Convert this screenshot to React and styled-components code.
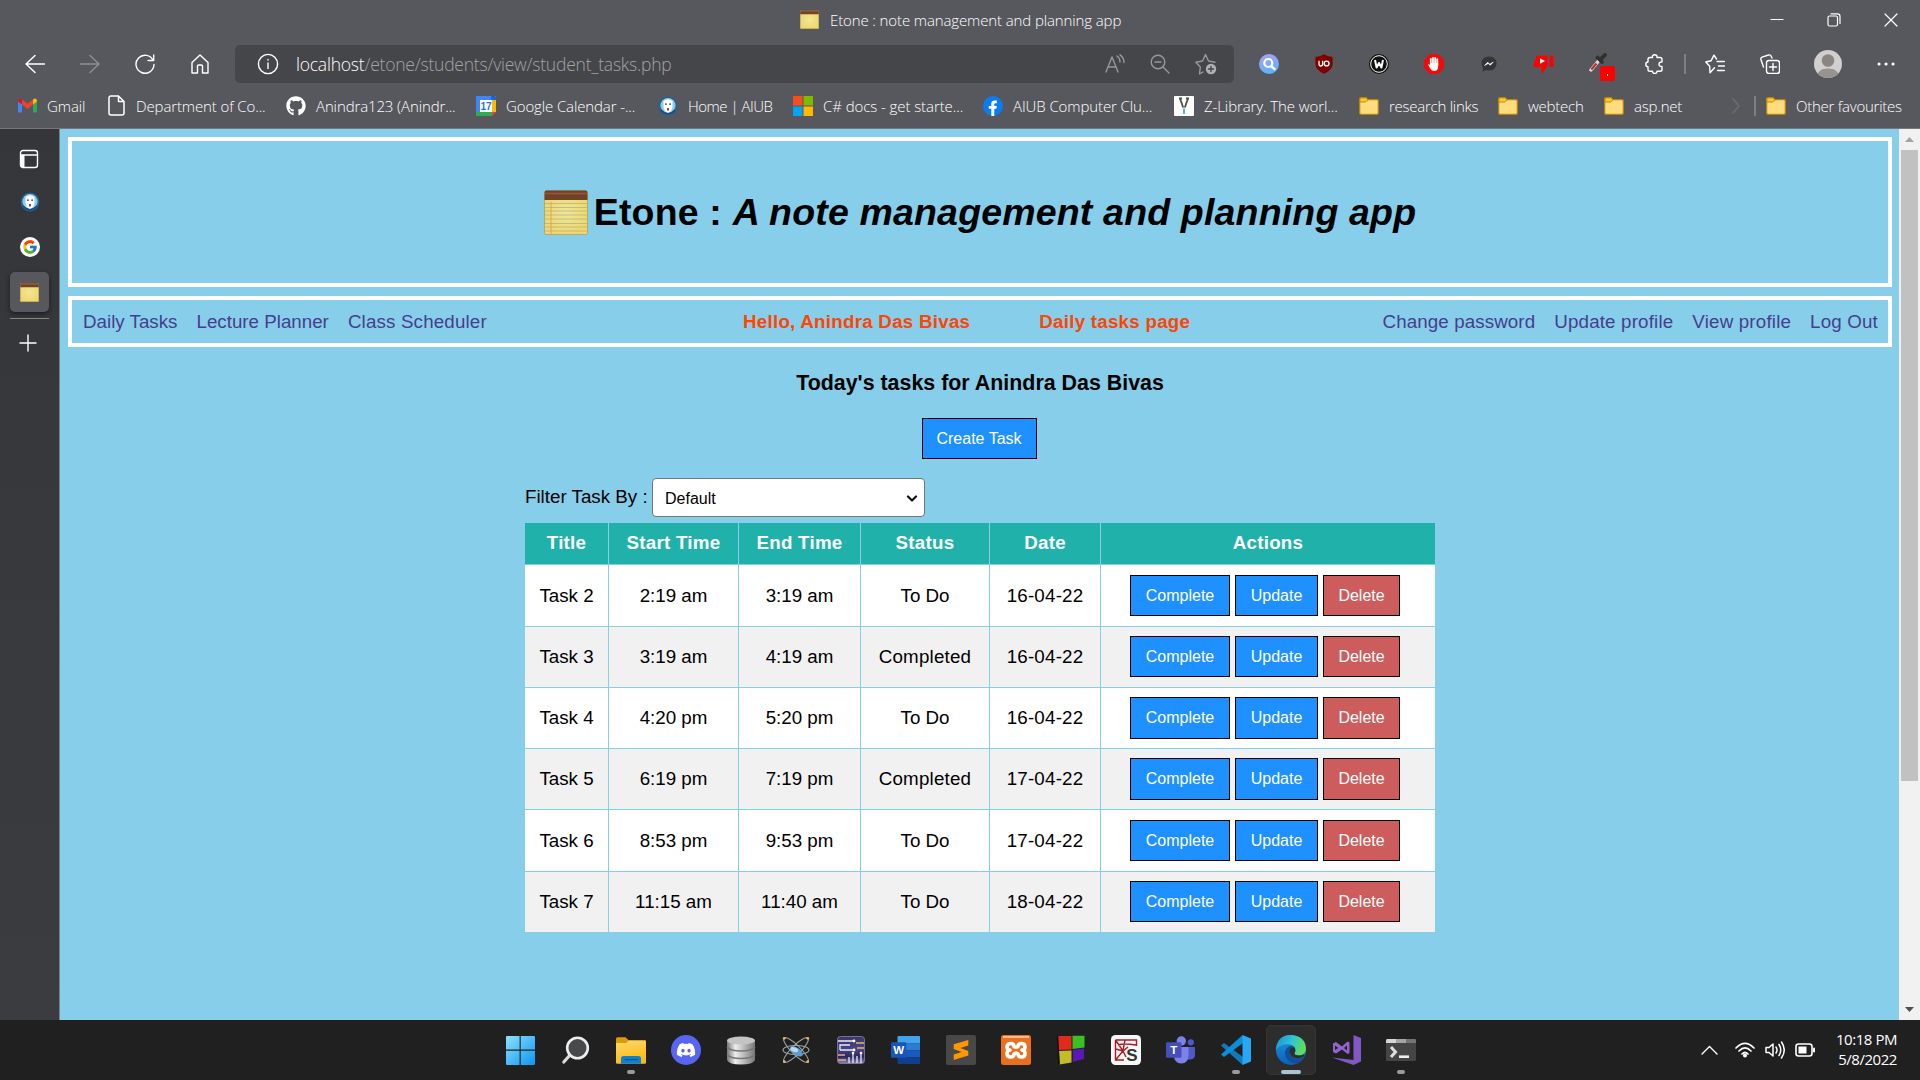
import React from "react";
import styled, { createGlobalStyle } from "styled-components";
import { FaGithub, FaDiscord } from "react-icons/fa";
import { FcGoogle } from "react-icons/fc";

const Global = createGlobalStyle`
  * { box-sizing: border-box; }
  html, body { margin: 0; padding: 0; overflow: hidden; background: #202020; }
  svg { display: block; flex: none; }
`;

const ui = `"Open Sans", "Noto Sans", sans-serif`;
const arial = `"Liberation Sans", Arial, sans-serif`;

const Desktop = styled.div`
  width: 1920px;
  height: 1080px;
  display: flex;
  flex-direction: column;
  font-family: ${ui};
`;

/* ---------- browser chrome ---------- */
const Chrome = styled.header`
  height: 129px;
  flex: none;
  background: #57585d;
  border-bottom: 1px solid #77787b;
  color: #fff;
  display: flex;
  flex-direction: column;
`;
const TitleBar = styled.div`
  height: 40px;
  display: grid;
  grid-template-columns: 800px 1fr 177px;
  align-items: center;
`;
const WindowTitle = styled.div`
  grid-column: 2;
  display: flex;
  align-items: center;
  gap: 11px;
  padding-bottom: 1px;
  font-size: 15px;
  font-weight: 300;
  line-height: 20px;
  letter-spacing: -0.12px;
  white-space: pre;
`;
const WindowButtons = styled.div`
  display: flex;
  justify-content: space-between;
  align-items: center;
  padding: 0 22px 0 27px;
`;
const ToolRow = styled.div`
  height: 48px;
  display: flex;
  align-items: center;
`;
const ToolSlot = styled.div`
  width: ${(p) => p.$w || 55}px;
  flex: none;
  display: flex;
  justify-content: center;
  align-items: center;
  padding-top: ${(p) => p.$drop || 0}px;
`;
const NavButtons = styled.div`
  width: 235px;
  padding-left: 7px;
  display: flex;
`;
const Address = styled.div`
  width: 999px;
  height: 38px;
  border-radius: 5px;
  background: #454649;
  display: flex;
  align-items: center;
  padding-left: 22px;
`;
const Url = styled.div`
  flex: 1;
  padding-left: 17px;
  font-size: 17.5px;
  line-height: 24px;
  font-weight: 300;
  letter-spacing: -0.22px;
  color: #a3a3a5;
  b { font-weight: 300; color: #fff; }
`;
const Extensions = styled.div`
  display: flex;
  align-items: center;
  padding-left: 7px;
`;
const VRule = styled.div`
  width: 2px;
  height: 20px;
  background: #7d7e82;
`;
const Bookmarks = styled.div`
  height: 35px;
  display: flex;
  align-items: center;
  padding-left: 18px;
`;
const Bookmark = styled.div`
  width: ${(p) => p.$w}px;
  flex: none;
  display: flex;
  align-items: center;
  gap: 10px;
  font-size: 15px;
  font-weight: 300;
  line-height: 20px;
  white-space: pre;
  letter-spacing: ${(p) => p.$ls || 0}px;
`;

/* ---------- middle ---------- */
const Middle = styled.div`
  height: 891px;
  flex: none;
  display: flex;
`;
const Sidebar = styled.aside`
  width: 60px;
  flex: none;
  background: linear-gradient(#35363a, #3b3c3f);
  border-right: 1px solid #7b7f83;
  display: flex;
  flex-direction: column;
  align-items: center;
  padding-top: 10px;
`;
const SideSlot = styled.div`
  width: 39px;
  height: ${(p) => p.$h}px;
  display: flex;
  justify-content: center;
  align-items: center;
  padding-right: ${(p) => p.$nudge || 0}px;
`;
const ActiveTab = styled(SideSlot)`
  background: #57585d;
  border-radius: 5px;
  box-shadow: 0 2px 5px rgba(0, 0, 0, 0.5);
`;
const SideRule = styled.div`
  width: 39px;
  height: 1px;
  margin: 6px 0;
  background: #858689;
`;
const Page = styled.main`
  width: 1839px;
  flex: none;
  background: #87ceeb;
  padding: 8px 7px 0 8px;
  font-family: ${arial};
  font-size: 18.75px;
  color: #000;
  display: flex;
  flex-direction: column;
  align-items: center;
`;
const Hero = styled.div`
  width: 100%;
  height: 150px;
  border: 4px solid #fff;
  display: flex;
  align-items: center;
  justify-content: center;
  gap: 6px;
  font-size: 37.5px;
  font-weight: bold;
  letter-spacing: 0.17px;
  white-space: pre;
  h1 { font-size: inherit; margin: 0; }
`;
const NavBar = styled.nav`
  width: 100%;
  height: 51px;
  margin-top: 9px;
  border: 4px solid #fff;
  display: grid;
  grid-template-columns: 671px 1fr auto;
  align-items: center;
  padding: 0 10px 0 0;
`;
const Links = styled.div`
  display: flex;
  gap: 19px;
  padding-left: 11px;
  color: #483d8b;
`;
const Spaced = styled.span`
  letter-spacing: ${(p) => p.$ls}px;
`;
const Greeting = styled.div`
  display: flex;
  gap: 69px;
  color: #ff4500;
  font-weight: bold;
  letter-spacing: 0.25px;
`;
const Heading = styled.h3`
  margin: 24px 0 0;
  font-size: 21.4px;
  line-height: 24px;
`;
const Button = styled.button`
  width: ${(p) => p.$w}px;
  height: ${(p) => p.$h || 41}px;
  padding: 0;
  border: 1px solid #000;
  background: ${(p) => (p.$danger ? "#cd5c5c" : "#1e90ff")};
  color: #fff;
  font: 16px ${arial};
`;
const CreateWrap = styled.div`
  margin-top: 23px;
  padding-right: 2px;
`;
const Tasks = styled.section`
  width: 910px;
  margin-top: 19px;
`;
const Filter = styled.label`
  display: flex;
  align-items: center;
  height: 39px;
  margin-bottom: 6px;
  white-space: pre;
`;
const FilterText = styled.span`
  width: 127px;
  padding-bottom: 2px;
`;
const SelectBox = styled.div`
  width: 273px;
  height: 39px;
  border: 1px solid #767676;
  border-radius: 4px;
  background: #fff;
  display: flex;
  align-items: center;
  justify-content: space-between;
  padding: 2px 6px 0 12px;
  font-size: 16px;
`;
const Row = styled.div`
  display: grid;
  grid-template-columns: 83px 129px 121px 128px 110px 334px;
  column-gap: 1px;
  height: ${(p) => p.$h}px;
  margin-bottom: 1px;
`;
const Cell = styled.div`
  display: flex;
  align-items: center;
  justify-content: center;
  padding-bottom: ${(p) => (p.$head ? 1 : 0)}px;
  background: ${(p) => (p.$head ? "#20b2aa" : p.$odd ? "#f1f1f1" : "#fff")};
  color: ${(p) => (p.$head ? "#fff" : "#000")};
  font-weight: ${(p) => (p.$head ? "bold" : "normal")};
  letter-spacing: ${(p) => (p.$head ? 0.25 : p.$wide ? 0.2 : 0)}px;
`;
const ActionCell = styled(Cell)`
  gap: 5px;
  padding: 0 6px ${(p) => p.$lift}px 0;
`;
const Scrollbar = styled.div`
  width: 21px;
  background: #f1f1f1;
  display: flex;
  flex-direction: column;
  align-items: center;
  justify-content: space-between;
  padding: 8px 0;
`;
const Thumb = styled.div`
  width: 17px;
  height: 631px;
  margin: 8px 0 auto;
  background: #c1c1c1;
`;

/* ---------- taskbar ---------- */
const Taskbar = styled.footer`
  height: 60px;
  flex: none;
  background: #202020;
  display: grid;
  grid-template-columns: 493px 935px 1fr;
  color: #fff;
`;
const Apps = styled.div`
  grid-column: 2;
  display: flex;
  align-items: center;
`;
const AppSlot = styled.div`
  width: 55px;
  height: 60px;
  padding-left: 3px;
  display: flex;
  align-items: center;
`;
const AppTile = styled.div`
  width: 50px;
  height: 50px;
  border-radius: 5px;
  border: 1px solid ${(p) => (p.$active ? "#353535" : "transparent")};
  background: ${(p) => (p.$active ? "#2d2d2d" : "transparent")};
  display: flex;
  flex-direction: column;
  align-items: center;
  padding-top: 9px;
`;
const Indicator = styled.div`
  width: ${(p) => (p.$active ? 20 : 8)}px;
  height: 4px;
  margin-top: 5px;
  border-radius: 2px;
  background: ${(p) => (p.$active ? "#a9c5cf" : "#9a9a9a")};
`;
const Tray = styled.div`
  display: flex;
  align-items: center;
  justify-content: flex-end;
  padding-right: 23px;
`;
const TrayIcons = styled.div`
  display: flex;
  align-items: center;
  gap: 10px;
  margin-right: 21px;
`;
const Clock = styled.div`
  text-align: right;
  font-size: 15px;
  line-height: 20px;
  letter-spacing: -0.45px;
  padding-bottom: 2px;
`;

/* ---------- icons ---------- */
const Line = ({ w = 20, h = 20, c = "#fff", sw = 1.4, children, vb }) => (
  <svg width={w} height={h} viewBox={vb || `0 0 ${w} ${h}`} fill="none" stroke={c} strokeWidth={sw} strokeLinecap="round" strokeLinejoin="round">
    {children}
  </svg>
);

const Notepad = ({ w = 19, h = 19, big }) => (
  <svg width={w} height={h} viewBox="0 0 44 45" preserveAspectRatio="none">
    <defs>
      <radialGradient id="paper"><stop offset="0" stopColor={big ? "#fff3a0" : "#f0e79a"} /><stop offset="1" stopColor="#f0d86c" /></radialGradient>
    </defs>
    <rect x="0.5" y="0.5" width="43" height="44" rx="2" fill="url(#paper)" stroke="#b09a4c" strokeWidth="0.7" />
    <path d="M0.5 10V2.5Q0.5 .5 2.5 .5H41.5Q43.5 .5 43.5 2.5V10Z" fill="#71422a" />
    <path d="M1 3.5H43" stroke="#96583a" strokeWidth="1.6" />
    {big && <path d="M1 13.5H43M1 17.5H43M1 21H43M1 25H43M1 29H43M1 33.5H43M1 37H43M1 41H43" stroke="#b3b38a" strokeWidth="0.8" />}
    {big && <path d="M7 12V44" stroke="#d89a63" strokeWidth="0.8" />}
  </svg>
);

const Folder = () => (
  <svg width="20" height="18" viewBox="0 0 20 18">
    <path d="M.7 2Q.7.7 2 .7H7L9 2.7H18Q19.3 2.7 19.3 4V16Q19.3 17.3 18 17.3H2Q.7 17.3 .7 16Z" fill="#ffdc7c" stroke="#b8860b" strokeWidth="1.2" />
    <path d="M.9 5H6.5L9 2.9L7.2.9H2Q.9.9.9 2Z" fill="#ffc928" stroke="#b8860b" strokeWidth="0.9" />
  </svg>
);

const Aiub = () => (
  <svg width="20" height="20" viewBox="0 0 20 20">
    <circle cx="10" cy="10" r="9.4" fill="#23628f" />
    <circle cx="10" cy="9.5" r="7.6" fill="#8cc9e8" />
    <path d="M5.5 5Q10 1.5 14.5 5V11Q14 15.5 10 17Q6 15.5 5.5 11Z" fill="#fff" />
    <path d="M7 8.2H8.8M11.2 8.2H13" stroke="#335" strokeWidth="1.3" />
    <path d="M9 12H11V14.5H9Z" fill="#8a4a48" />
    <path d="M3 14Q10 21.5 17 14" stroke="#164e80" strokeWidth="1.4" fill="none" />
  </svg>
);

const Gmail = () => (
  <svg width="19" height="15" viewBox="0 0 19 15">
    <path d="M0 3V13.5Q0 14.5 1 14.5H4V6Z" fill="#4285f4" />
    <path d="M19 3V13.5Q19 14.5 18 14.5H15V6Z" fill="#34a853" />
    <path d="M4 1.5L9.5 5.8L15 1.5V6.5L9.5 11L4 6.5Z" fill="#ea4335" />
    <path d="M0 3Q0 .3 2.5 .4L4 1.5V6.5L0 3.5Z" fill="#c5221f" />
    <path d="M19 3Q19 .3 16.5 .4L15 1.5V6.5L19 3.5Z" fill="#fbbc04" />
  </svg>
);

const Calendar = () => (
  <svg width="20" height="20" viewBox="0 0 20 20">
    <path d="M0 1Q0 0 1 0H15V4H4V16H0Z" fill="#4285f4" />
    <path d="M15 0H19Q20 0 20 1V16H16V4H15Z" fill="#fbbc04" />
    <path d="M15 0H19Q20 0 20 1V4H15Z" fill="#1967d2" />
    <path d="M0 16H16V20H1Q0 20 0 19Z" fill="#34a853" />
    <path d="M16 16H20L16 20Z" fill="#ea4335" />
    <rect x="4" y="4" width="12" height="12" fill="#fff" />
    <text x="10" y="13.7" fontSize="10" fontWeight="bold" letterSpacing="0" fontFamily="Liberation Sans" fill="#1a73e8" textAnchor="middle">17</text>
  </svg>
);

const MsLogo = () => (
  <svg width="20" height="20" viewBox="0 0 20 20">
    <path d="M0 0H9.5V9.5H0Z" fill="#f25022" /><path d="M10.5 0H20V9.5H10.5Z" fill="#7fba00" />
    <path d="M0 10.5H9.5V20H0Z" fill="#00a4ef" /><path d="M10.5 10.5H20V20H10.5Z" fill="#ffb900" />
  </svg>
);

const Facebook = () => (
  <svg width="20" height="20" viewBox="0 0 20 20">
    <circle cx="10" cy="10" r="10" fill="#0a7cf2" />
    <path d="M8.3 20V12.8H5.8V10H8.3V7.8Q8.3 4.6 11.6 4.6H13.8V7.2H12.4Q11.3 7.2 11.3 8.3V10H13.8L13.4 12.8H11.3V20Z" fill="#fff" />
  </svg>
);

const ZLib = () => (
  <svg width="20" height="20" viewBox="0 0 20 20">
    <rect width="20" height="20" rx="1" fill="#fff" />
    <path d="M5 2.5H8M12 2.5H15M6.2 3L9.2 11.5M13.8 3L10.8 11.5" stroke="#505050" strokeWidth="1.8" fill="none" />
    <path d="M10 12.5V18" stroke="#4fb4de" strokeWidth="2" />
  </svg>
);

const FileIcon = () => (
  <Line w={18} h={21} sw={1.5}><path d="M3 1H10.5L16 6.5V18Q16 20 14 20H3Q1 20 1 18V3Q1 1 3 1ZM10.5 1V6.5H16" /></Line>
);

const Search = () => (
  <svg width="20" height="20" viewBox="0 0 20 20">
    <defs><linearGradient id="sg" x1="0" y1="0" x2="0.4" y2="1"><stop stopColor="#b49cf5" /><stop offset="1" stopColor="#5ab4fa" /></linearGradient></defs>
    <circle cx="10" cy="10" r="10" fill="url(#sg)" />
    <circle cx="9.3" cy="9" r="4" fill="none" stroke="#fff" strokeWidth="2.2" /><path d="M12.5 12.5L15.5 15" stroke="#fff" strokeWidth="2.3" strokeLinecap="round" />
  </svg>
);
const Ublock = () => (
  <svg width="20" height="20" viewBox="0 0 20 20">
    <path d="M10 .3Q14 3 18.6 3V10Q18.6 16 10 19.7Q1.4 16 1.4 10V3Q6 3 10 .3Z" fill="#800000" />
    <path d="M5 6.8V10Q5 12 6.8 12Q8.6 12 8.6 10V6.8" stroke="#fff" strokeWidth="1.3" fill="none" />
    <circle cx="12.6" cy="9.5" r="2.4" stroke="#fff" strokeWidth="1.4" fill="none" />
  </svg>
);
const WIcon = () => (
  <svg width="20" height="20" viewBox="0 0 20 20">
    <circle cx="10" cy="10" r="10" fill="#111" /><circle cx="10" cy="10" r="8.3" fill="#111" stroke="#fff" strokeWidth="1" />
    <path d="M6 6L7.6 13.5L10 9L12.4 13.5L14 6" stroke="#fff" strokeWidth="2" fill="none" strokeLinejoin="round" />
  </svg>
);
const Hand = () => (
  <svg width="20" height="20" viewBox="0 0 20 20">
    <path d="M6 0H14L20 6V14L14 20H6L0 14V6Z" fill="#f00a0a" />
    <path d="M6.8 5V11M9 3.8V10M11.2 3.8V10M13.3 5.2V11" stroke="#fff" strokeWidth="1.8" strokeLinecap="round" />
    <path d="M6 9H14.2V12.5Q14 17 10.2 17Q7.5 17 6.3 14.5L4 10.5Q5 9.8 6 11Z" fill="#fff" />
  </svg>
);
const Messenger = () => (
  <svg width="16" height="16" viewBox="0 0 16 16">
    <path d="M8 .5Q15.5 .8 15.5 7.5Q15.3 14 8 14.5L5 14L1.5 15.6L2 12Q.5 10 .5 7.5Q.8 .8 8 .5Z" fill="#333436" />
    <path d="M3.5 9.5L6.7 6.2L8.7 8.2L12.3 6L9.3 9.2L7.2 7.5Z" fill="#fff" stroke="#fff" strokeWidth=".6" />
  </svg>
);
const Dislike = () => (
  <svg width="21" height="20" viewBox="0 0 21 20">
    <path d="M5 1.5H14.5V12L9 19.5Q7 18.5 9 13H2Q0 13 .5 11L3.2 3Q3.7 1.5 5 1.5ZM16.5 1.5H20.5V13H16.5Z" fill="#f00" />
    <path d="M7 4.3L12 7L7 9.8Z" fill="#fff" />
  </svg>
);
const Dropper = () => (
  <svg width="26" height="28" viewBox="0 0 26 28">
    <path d="M2 17L9.5 8" stroke="#ddd" strokeWidth="3.4" strokeLinecap="round" />
    <path d="M2.3 16.5L7.5 10.5" stroke="#c8262a" strokeWidth="2" />
    <path d="M8.5 4.5L13 9M11 6.8L16 1.8" stroke="#303030" strokeWidth="3.8" strokeLinecap="round" />
    <rect x="11" y="13" width="15" height="15" rx="2" fill="#f00" /><path d="M18.5 21V23" stroke="#fff" />
  </svg>
);
const Avatar = () => (
  <svg width="28" height="28" viewBox="0 0 28 28">
    <defs><clipPath id="av"><circle cx="14" cy="14" r="14" /></clipPath></defs>
    <g clipPath="url(#av)"><rect width="28" height="28" fill="#d2d0ce" /><circle cx="14" cy="10.5" r="6.3" fill="#8a8583" /><path d="M3 28Q3 18.5 14 18.5Q25 18.5 25 28Z" fill="#979391" /></g>
  </svg>
);

const A = ({ children, x = 0 }) => <svg width="30" height="30" viewBox={`${x} 0 30 30`}>{children}</svg>;
const appIcons = [
  { name: "start", el: <A x={1}><defs><linearGradient id="wg" x1="0" y1="0" x2="1" y2="1"><stop stopColor="#8be3fb" /><stop offset="1" stopColor="#0c94f4" /></linearGradient></defs><path d="M1 2Q1 1 2 1H14.6V14.6H1ZM15.7 1H29Q30 1 30 2V14.6H15.7ZM1 15.7H14.6V30H2Q1 30 1 29ZM15.7 15.7H30V29Q30 30 29 30H15.7Z" fill="url(#wg)" /></A> },
  { name: "search", el: <A><path d="M9 20L2.8 27" stroke="#d8dadd" strokeWidth="3.2" strokeLinecap="round" /><circle cx="16.5" cy="13" r="10.3" fill="#48494b" stroke="#eceef0" strokeWidth="2.6" /></A> },
  { name: "files", ind: true, el: <A><defs><linearGradient id="ff" x1="0" y1="0" x2="0.3" y2="1"><stop stopColor="#ffd96b" /><stop offset="1" stopColor="#fcbb13" /></linearGradient></defs><path d="M0 4Q0 2.3 1.5 2.3H9.5L13 5.5V12H0Z" fill="#dd9b08" /><path d="M0 8H10L13 5.3H29Q30 5.3 30 6.5V27.5Q30 28.7 28.7 28.7H1.3Q0 28.7 0 27.5Z" fill="url(#ff)" /><path d="M5 28.7V23.5Q5 21 7.5 21H22.5Q25 21 25 23.5V28.7Z" fill="#1080d0" /><path d="M8.5 24.6H21.5" stroke="#0a4c86" strokeWidth="1.2" /></A> },
  { name: "discord", el: <A><circle cx="15" cy="15" r="15" fill="#5865f2" /><FaDiscord x="5" y="5" width="20" height="20" color="#fff" size="20" /></A> },
  { name: "database", el: <A><defs><linearGradient id="db"><stop stopColor="#777" /><stop offset=".3" stopColor="#eee" /><stop offset="1" stopColor="#777" /></linearGradient></defs><path d="M1 5V25Q3 29.5 15 29.5Q27 29.5 29 25V5Z" fill="url(#db)" /><ellipse cx="15" cy="5.5" rx="14" ry="4" fill="#c4c4c4" /><path d="M1 12Q4 16 15 16Q26 16 29 12M1 19.5Q4 23.5 15 23.5Q26 23.5 29 19.5" stroke="#777" strokeWidth="1.6" fill="none" /></A> },
  { name: "atom", el: <A><g fill="none" stroke="#9aa39f" strokeWidth="1.1"><ellipse cx="15" cy="15" rx="17" ry="4.5" transform="rotate(45 15 15)" /><ellipse cx="15" cy="15" rx="17" ry="4.5" transform="rotate(-45 15 15)" /><ellipse cx="15" cy="15" rx="13" ry="4.5" /></g><ellipse cx="15.5" cy="16" rx="7.5" ry="3.6" transform="rotate(35 15 16)" fill="#5b9cd0" /><ellipse cx="13.5" cy="14.5" rx="4" ry="2.3" transform="rotate(20 13 14)" fill="#b9d9ee" /><g fill="#e8b45a"><circle cx="3.3" cy="3.3" r="1.4" /><circle cx="26.7" cy="3.3" r="1.4" /><circle cx="3.3" cy="26.7" r="1.4" /><circle cx="26.7" cy="26.7" r="1.4" /></g></A> },
  { name: "circuit", el: <A><defs><linearGradient id="ci" x1="0" y1="0" x2="0" y2="1"><stop stopColor="#3b356f" /><stop offset=".5" stopColor="#4a4488" /><stop offset=".75" stopColor="#2b2560" /><stop offset="1" stopColor="#8d88b8" /></linearGradient></defs><rect x="1.5" y="1.5" width="27" height="27" rx="3" fill="url(#ci)" stroke="#8883ae" strokeWidth=".8" /><g stroke="#eceaf5" strokeWidth="1.3" fill="none"><path d="M2 6H17M4 15V10H14M4 15H17M13 28V22M17 28V18M21 28V21M25 28V18" /></g><path d="M20 8H28M21 13H28M2 20H9M2 25H10" stroke="#e3b472" strokeWidth="1.4" /><g fill="#fff"><circle cx="18" cy="6" r="1.4" /><circle cx="18" cy="15" r="1.4" /><circle cx="17" cy="18" r="1.3" /><circle cx="25" cy="18" r="1.3" /></g></A> },
  { name: "word", el: <A x={1}><path d="M7.5 2Q7.5 1 8.5 1H29Q30 1 30 2V8.2H7.5Z" fill="#41a5ee" /><path d="M7.5 8.2H30V15.2H7.5Z" fill="#2b7cd3" /><path d="M7.5 15.2H30V22.3H7.5Z" fill="#185abd" /><path d="M7.5 22.3H30V28Q30 29 29 29H8.5Q7.5 29 7.5 28Z" fill="#103f91" /><rect x="1" y="7.2" width="15.3" height="15.5" rx="1.3" fill="#1857b8" /><text x="8.6" y="19" fontFamily="Liberation Sans" fontWeight="bold" fontSize="11.5" fill="#fff" textAnchor="middle">W</text></A> },
  { name: "sublime", el: <A><rect width="30" height="30" rx="2" fill="#484848" /><path d="M22.3 5V10.5L14.5 13L22.3 16V20.5L7.7 25V19.5L15.5 17L7.7 14V9.3Z" fill="#ff9800" /></A> },
  { name: "xampp", el: <A><rect width="30" height="30" rx="2.5" fill="#e8701f" /><rect x="2" y="1" width="26" height="2" fill="#f5b98c" /><path d="M10 8.5Q6 8.5 6 12Q6 15 9 15Q6 15 6 18.5Q6 22 10 22Q13 22 13 19Q15 17 17 19Q17 22 20.5 22Q24 22 24 18.5Q24 15 21 15Q24 15 24 12Q24 8.5 20.5 8.5Q17 8.5 17 11.5Q15 13 13 11.5Q13 8.5 10 8.5Z" fill="none" stroke="#fff" strokeWidth="3.6" strokeLinejoin="round" /></A> },
  { name: "blocks", el: <A><path d="M1.5 1H15.5V14.5L2 15Z" fill="#e02a1c" /><path d="M16.5 .8H28.5V12.5L16.5 14Z" fill="#3bbf22" /><path d="M3 16L15.5 15.4V27.5L3.5 29.5Z" fill="#c2bc25" /><path d="M16.8 15L28 13.5V24L16.8 27Z" fill="#5a18b8" /><path d="M1.5 1L3 29.5" stroke="#111" strokeWidth="1.6" /></A> },
  { name: "spyder", el: <A><rect width="30" height="30" rx="4.5" fill="#f7f7f7" /><path d="M4.5 5H25.5V11M4.5 5V25H13M4.5 25L12 16L14 5M4.5 14L12 16L17 12M4.5 5L12 16M7 10Q12 8 25 10M12 16L15 22" fill="none" stroke="#a61c22" strokeWidth="1.4" /><text x="21" y="25.5" fontFamily="Liberation Sans" fontWeight="bold" fontSize="17" fill="#333" textAnchor="middle">S</text></A> },
  { name: "teams", el: <A x={1}><circle cx="25.8" cy="7.3" r="3.1" fill="#5059c9" /><path d="M20 12H29Q30 12 30 13V19.5Q30 24.5 25 24.5H20Z" fill="#5059c9" /><circle cx="16.3" cy="6" r="4.7" fill="#7b83eb" /><path d="M9 12H23.5V20Q23.5 28.5 16.3 28.5Q9 28.5 9 20Z" fill="#7b83eb" /><rect x="1" y="7.3" width="15.5" height="15.5" rx="1.3" fill="#464eb8" /><text x="8.7" y="19" fontFamily="Liberation Sans" fontWeight="bold" fontSize="11.5" fill="#fff" textAnchor="middle">T</text></A> },
  { name: "vscode", ind: true, el: <A><path d="M0 10.5L3 8L22 22V30L20.5 29Z" fill="#1279bd" /><path d="M0 19.5L3 22L22 8V0L20.5 1Z" fill="#0b8ede" /><path d="M21.5 0V30L30 26.5V3.5Z" fill="#27a7f5" /></A> },
  { name: "edge", ind: true, active: true, el: <A><defs><linearGradient id="e1" x1="0" x2="1" y1="0.2" y2="0.5"><stop stopColor="#1c93d2" /><stop offset=".5" stopColor="#30c3d8" /><stop offset="1" stopColor="#62e04e" /></linearGradient><linearGradient id="e2" x1="0" y1="0" x2="0" y2="1"><stop stopColor="#1f97dc" /><stop offset="1" stopColor="#0b5fbf" /></linearGradient></defs><circle cx="15" cy="15" r="15" fill="url(#e2)" /><path d="M0 13Q2 0 15 0Q29 1 30 13Q30 20 23 20.5Q18 20.5 18.5 18Q20 16 19 13Q17 9.5 12 9.3Q4 9 0 15Z" fill="url(#e1)" /><path d="M19 13Q16 9 12 12Q7 16 10 22.5Q13 28.5 21 28.8Q26 26.5 28 22Q23 24.5 17 22.5Q12 19 15 15.5Q16.5 13.5 19 13Z" fill="#124f98" /><path d="M18.5 18Q20 16 19 13.2Q16.5 11.5 14 14.5Q12.5 18 16 21.5Q21 25 28 21.5Q29 20.3 28 19.2Q25 21 21.5 20.3Q18 19.8 18.5 18Z" fill="#2d2d2d" /></A> },
  { name: "visual studio", el: <A><path d="M22.5 0L30 3V26.5L22.5 30L1 22.5L22.5 25Z" fill="#8458c4" /><path d="M2 8.5L5 7L11 11.6L16.5 6.5L18.5 7.5V18L16.5 19L11 14.5L5 18.5L2 17ZM4 10.5V15L7.3 12.9ZM13 13L16 15.5V10.5Z" fill="#9563d0" fillRule="evenodd" /></A> },
  { name: "terminal", ind: true, el: <A><path d="M0 4H30V24.5Q30 26 28.5 26H1.5Q0 26 0 24.5Z" fill="#454545" /><path d="M0 5.5Q0 4 1.5 4H10V8H0Z" fill="#d6d6d6" /><path d="M10 4H20V8H10Z" fill="#a5a5a5" /><path d="M20 4H28.5Q30 4 30 5.5V8H20Z" fill="#757575" /><path d="M5 12L9.5 17L5 22" stroke="#dedede" strokeWidth="3" fill="none" /><path d="M13 21.7H23" stroke="#eee" strokeWidth="2.6" /></A> },
];

const bookmarks = [
  { w: 90, ls: -0.1, t: "Gmail", i: <Gmail /> },
  { w: 178, ls: -0.12, t: "Department of Co...", i: <FileIcon /> },
  { w: 190, ls: -0.12, t: "Anindra123 (Anindr...", i: <FaGithub size={20} color="#fff" /> },
  { w: 182, ls: -0.12, t: "Google Calendar -...", i: <Calendar /> },
  { w: 135, ls: -0.5, t: "Home | AIUB", i: <Aiub /> },
  { w: 190, ls: -0.08, t: "C# docs - get starte...", i: <MsLogo /> },
  { w: 191, ls: -0.1, t: "AIUB Computer Clu...", i: <Facebook /> },
  { w: 185, ls: -0.1, t: "Z-Library. The worl...", i: <ZLib /> },
  { w: 139, ls: -0.25, t: "research links", i: <Folder /> },
  { w: 106, ls: -0.25, t: "webtech", i: <Folder /> },
  { w: 124, ls: -0.2, t: "asp.net", i: <Folder /> },
];

const rows = [
  [61, "Task 2", "2:19 am", "3:19 am", "To Do", "16-04-22"],
  [60, "Task 3", "3:19 am", "4:19 am", "Completed", "16-04-22"],
  [60, "Task 4", "4:20 pm", "5:20 pm", "To Do", "16-04-22"],
  [60, "Task 5", "6:19 pm", "7:19 pm", "Completed", "17-04-22"],
  [61, "Task 6", "8:53 pm", "9:53 pm", "To Do", "17-04-22"],
  [60, "Task 7", "11:15 am", "11:40 am", "To Do", "18-04-22"],
];
const buttonHeights = [41, 41, 42, 42, 41, 41];

export default function App() {
  return (
    <Desktop>
      <Global />
      <Chrome>
        <TitleBar>
          <WindowTitle><Notepad />Etone : note management and planning app</WindowTitle>
          <WindowButtons>
            <Line w={14} h={14} sw={1.2}><path d="M1 6.5H13" /></Line>
            <Line w={14} h={14} sw={1.2}><path d="M1 4.5Q1 3 2.5 3H9Q10.5 3 10.5 4.5V11.5Q10.5 13 9 13H2.5Q1 13 1 11.5ZM4 .8H10.5Q13 .8 13 3.5V10.5" /></Line>
            <Line w={14} h={14} sw={1.2}><path d="M1 1L13 13M13 1L1 13" /></Line>
          </WindowButtons>
        </TitleBar>
        <ToolRow>
          <NavButtons>
            <ToolSlot><Line w={20} h={20}><path d="M10 1.5L1 10L10 18.5M1 10H19.5" /></Line></ToolSlot>
            <ToolSlot><Line w={20} h={20} c="#8e8f92"><path d="M10 1.5L19 10L10 18.5M19 10H.5" /></Line></ToolSlot>
            <ToolSlot><Line w={20} h={20}><path d="M18.2 6.5A9 9 0 1 0 19 10.5M18.7 1V6.5H13" /></Line></ToolSlot>
            <ToolSlot><Line w={20} h={20}><path d="M2 8.5L10 1L18 8.5V19H12.5V12Q12.5 11 11.5 11H8.5Q7.5 11 7.5 12V19H2Z" /></Line></ToolSlot>
          </NavButtons>
          <Address>
            <Line w={22} h={22}><circle cx="11" cy="11" r="9.6" /><path d="M11 10V15.5M11 6.5V7" /></Line>
            <Url><b>localhost</b>/etone/students/view/student_tasks.php</Url>
            <ToolSlot $w={54}><Line w={20} h={20} c="#97989a"><path d="M1 18L7 3L13 18M3 13H11M12 2Q15 4 15 8M15 .8Q19 3.5 19 8.5" /></Line></ToolSlot>
            <ToolSlot $w={36}><Line w={20} h={20} c="#97989a"><circle cx="8" cy="8" r="6.8" /><path d="M13 13L19 19M5 8H11" /></Line></ToolSlot>
            <ToolSlot $w={56}><Line w={22} h={22} c="#97989a"><path d="M8 19L4.5 21L5.3 14L.8 9.2L7.5 8L10.5 1.5L13.5 8L20 9.2" /><circle cx="16" cy="16" r="5.2" fill="#b0b0b2" stroke="none" /><path d="M16 13.5V18.5M13.5 16H18.5" stroke="#454649" /></Line></ToolSlot>
          </Address>
          <Extensions>
            <ToolSlot><Search /></ToolSlot>
            <ToolSlot><Ublock /></ToolSlot>
            <ToolSlot><WIcon /></ToolSlot>
            <ToolSlot><Hand /></ToolSlot>
            <ToolSlot><Messenger /></ToolSlot>
            <ToolSlot><Dislike /></ToolSlot>
            <ToolSlot $w={61} $drop={6}><Dropper /></ToolSlot>
            <ToolSlot $w={46}><Line w={20} h={20}><path d="M3 5.5Q3 3.5 5 3.5H7.5Q7 .8 9.7 .8Q12.3 .8 12 3.5H15Q17 3.5 17 5.5V8Q14 7.7 14 10.2Q14 12.7 17 12.4V15.5Q17 17.3 15 17.3H12Q12 19.5 9.8 19.5Q7.6 19.5 7.5 17.3H5Q3 17.3 3 15.5V12.8Q.8 12.8 .8 10.3Q.8 8 3 8Z" /></Line></ToolSlot>
            <ToolSlot $w={14}><VRule /></ToolSlot>
            <ToolSlot $w={46}><Line w={20} h={20}><path d="M12 7.5H19.5M13.5 12H19.5M12.5 16.5H19.5M9.5 13.7L5 18.8L4.7 12.3L.8 8L6 6.8L9 1.2L11.5 5" /></Line></ToolSlot>
            <ToolSlot $w={64}><Line w={20} h={20}><rect x="6.5" y="6.5" width="13" height="13" rx="2.5" /><path d="M13 9.5V16.5M9.5 13H16.5M3.5 13L.9 5.5Q.5 3.8 2 3.2L8.5 1Q10.5 .5 11.2 2.2L12 4" /></Line></ToolSlot>
            <ToolSlot $w={52}><Avatar /></ToolSlot>
            <ToolSlot $w={63}><Line w={18} h={6} sw={3}><path d="M2 3H2.1M9 3H9.1M16 3H16.1" /></Line></ToolSlot>
          </Extensions>
        </ToolRow>
        <Bookmarks>
          {bookmarks.map((b) => (
            <Bookmark key={b.t} $w={b.w} $ls={b.ls}>{b.i}{b.t}</Bookmark>
          ))}
          <ToolSlot $w={16}><Line w={8} h={16} c="#6d6e72"><path d="M1 1L7 8L1 15" /></Line></ToolSlot>
          <ToolSlot $w={22}><VRule /></ToolSlot>
          <Bookmark $w={140} $ls={-0.25}><Folder />Other favourites</Bookmark>
        </Bookmarks>
      </Chrome>

      <Middle>
        <Sidebar>
          <SideSlot $h={40} $nudge={2}><Line w={20} h={20}><rect x="1.5" y="1.5" width="17" height="17" rx="2.5" /><path d="M2 6H18" /><path d="M3.5 6V18" strokeWidth="4" strokeLinecap="butt" /></Line></SideSlot>
          <SideSlot $h={45}><Aiub /></SideSlot>
          <SideSlot $h={45}>
            <svg width="20" height="20" viewBox="0 0 20 20"><circle cx="10" cy="10" r="10" fill="#fff" /><FcGoogle x="2" y="2" size="16" /></svg>
          </SideSlot>
          <SideSlot $h={3} />
          <ActiveTab $h={40}><Notepad /></ActiveTab>
          <SideRule />
          <SideSlot $h={36} $nudge={3}><Line w={18} h={18}><path d="M9 1V17M1 9H17" /></Line></SideSlot>
        </Sidebar>

        <Page>
          <Hero>
            <Notepad w={44} h={45} big />
            <h1>Etone : <i>A note management and planning app</i></h1>
          </Hero>
          <NavBar>
            <Links><span>Daily Tasks</span><span>Lecture Planner</span><Spaced $ls={0.16}>Class Scheduler</Spaced></Links>
            <Greeting><span>Hello, Anindra Das Bivas</span><span>Daily tasks page</span></Greeting>
            <Links>
              <Spaced $ls={0.1}>Change password</Spaced>
              <Spaced $ls={0.17}>Update profile</Spaced>
              <Spaced $ls={0.18}>View profile</Spaced>
              <Spaced $ls={0.17}>Log Out</Spaced>
            </Links>
          </NavBar>
          <Heading>Today's tasks for Anindra Das Bivas</Heading>
          <CreateWrap><Button $w={115}>Create Task</Button></CreateWrap>
          <Tasks>
            <Filter>
              <FilterText>Filter Task By :</FilterText>
              <SelectBox>Default<Line w={12} h={8} c="#111" sw={2.2}><path d="M2 1.5L6 5.5L10 1.5" /></Line></SelectBox>
            </Filter>
            <Row $h={41}>
              {["Title", "Start Time", "End Time", "Status", "Date", "Actions"].map((t) => <Cell key={t} $head>{t}</Cell>)}
            </Row>
            {rows.map(([h, ...cells], r) => (
              <Row key={r} $h={h}>
                {cells.map((t, i) => <Cell key={i} $odd={r % 2 === 1} $wide={i === 4 || t === "Completed"}>{t}</Cell>)}
                <ActionCell $odd={r % 2 === 1} $lift={h - buttonHeights[r] === 19 ? 1 : 0}>
                  <Button $w={100} $h={buttonHeights[r]}>Complete</Button>
                  <Button $w={83} $h={buttonHeights[r]}>Update</Button>
                  <Button $w={77} $h={buttonHeights[r]} $danger>Delete</Button>
                </ActionCell>
              </Row>
            ))}
          </Tasks>
        </Page>
        <Scrollbar>
          <svg width="9" height="5" viewBox="0 0 9 5"><path d="M0 5L4.5 0L9 5Z" fill="#a3a3a3" /></svg>
          <Thumb />
          <svg width="9" height="5" viewBox="0 0 9 5"><path d="M0 0L4.5 5L9 0Z" fill="#505050" /></svg>
        </Scrollbar>
      </Middle>

      <Taskbar>
        <Apps>
          {appIcons.map((a) => (
            <AppSlot key={a.name}>
              <AppTile $active={a.active}>{a.el}{a.ind && <Indicator $active={a.active} />}</AppTile>
            </AppSlot>
          ))}
        </Apps>
        <Tray>
          <TrayIcons>
            <Line w={33} h={10} vb="-9 0 33 10"><path d="M1 9L8.5 1.5L16 9" /></Line>
            <Line w={20} h={16} sw={1.7}><path d="M1 6Q10 -3 19 6M4 9Q10 3 16 9M7 12Q10 9 13 12" /><circle cx="10" cy="13.5" r="1.2" fill="#fff" /></Line>
            <Line w={20} h={18} sw={1.5}><path d="M1 6.5H4L8 3V15L4 11.5H1ZM11 6Q13 9 11 12M14 3.5Q17.5 9 14 14.5M16.5 1Q22 9 16.5 17" /></Line>
            <Line w={20} h={14} sw={1.6}><rect x="1" y="1" width="16" height="12" rx="2.5" /><rect x="3.5" y="3.5" width="8" height="7" fill="#fff" stroke="none" /><path d="M19 5.5V8.5" strokeWidth="2" /></Line>
          </TrayIcons>
          <Clock>10:18 PM<br />5/8/2022</Clock>
        </Tray>
      </Taskbar>
    </Desktop>
  );
}
